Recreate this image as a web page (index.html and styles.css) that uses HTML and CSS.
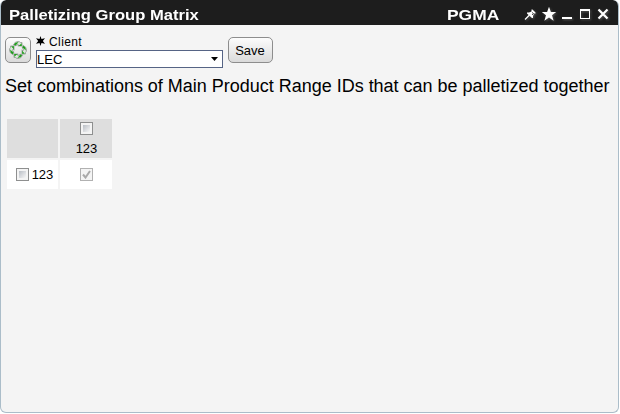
FILE: index.html
```html
<!DOCTYPE html>
<html lang="en">
<head>
<meta charset="utf-8">
<title>Palletizing Group Matrix</title>
<link rel="stylesheet" href="styles.css">
</head>
<body>
<main class="window">
  <header class="titlebar">
    <h1 class="title">Palletizing Group Matrix</h1>
    <span class="code">PGMA</span>
    <svg class="controls" width="86" height="16" viewBox="0 0 86 16">
      <path d="M1 13.500 5.500 9" fill="none" stroke="#fff" stroke-width="1.200"/>
      <path d="M3 6.500H5L7.500 5.500V3.500H8.500L11.500 6.500V7.500H10L9 10V12H8L3 7.500Z" fill="#fff"/>
      <path d="M8 6.500 9.500 7.500 8 9" fill="none" stroke="#1d1d1d" stroke-width=".8"/>
      <path d="M25 .8 26.900 6H32.200L28 9.200 29.600 14.800 25 11.500 20.400 14.800 22 9.200 17.800 6H23.100Z" fill="#fff"/>
      <path d="M38 11H48V13H38Z" fill="#fff"/>
      <path d="M56 3H66V13H56ZM57 5V12H65V5Z" fill="#fff" fill-rule="evenodd"/>
      <path d="M74.500 3.500 83.500 12.500M83.500 3.500 74.500 12.500" fill="none" stroke="#fff" stroke-width="2.200"/>
    </svg>
  </header>
  <div class="toolbar">
    <button class="btn refresh" aria-label="Refresh">
      <svg width="20" height="20" viewBox="0 0 20 20">
        <defs><g id="arrow">
          <path d="M5.500 5Q6.500 1.500 10 1.500 11.800 1.500 12.800 2.800L14 2.500V6H9.800L10.800 5Q9 3.800 8 5.800Z" fill="#dfe8df" stroke="#7d867e" stroke-width=".7"/>
          <path d="M5.800 5Q7 1.800 10.500 2.400L8.800 3.900 8 5.500ZM13.700 3.200V5.900H10.500Z" fill="#1f9f1c"/>
        </g></defs>
        <use href="#arrow"/><use href="#arrow" transform="rotate(90 10 10)"/><use href="#arrow" transform="rotate(180 10 10)"/><use href="#arrow" transform="rotate(270 10 10)"/>
      </svg>
    </button>
    <div class="field">
      <div class="label">
        <svg width="10" height="10" viewBox="0 0 10 10"><path d="M4.500 0 5.500 3 9 2.200 6.800 5 9 7.800 5.500 7 4.500 10 3.500 7 0 7.800 2.200 5 0 2.200 3.500 3Z"/></svg>
        <span>Client</span>
      </div>
      <div class="select"><span>LEC</span><svg width="7" height="4" viewBox="0 0 7 4"><path d="M0 0H7L3.500 4Z"/></svg></div>
    </div>
    <button class="btn save">Save</button>
  </div>
  <p class="intro">Set combinations of Main Product Range IDs that can be palletized together</p>
  <div class="matrix">
    <div class="cell head"></div>
    <div class="cell head column"><i class="check"></i><span>123</span></div>
    <div class="cell row"><i class="check"></i><span>123</span></div>
    <div class="cell"><i class="check disabled"><svg width="9" height="9" viewBox="0 0 9 9"><path d="M1 4.500 3.500 7.500 8 1" fill="none" stroke="#aaa" stroke-width="2"/></svg></i></div>
  </div>
</main>
</body>
</html>
```
FILE: styles.css
```css
* { box-sizing: border-box; }
body { margin: 0; background: #fff; font-family: "Liberation Sans", Arial, sans-serif; color: #000; }
.window { width: 619px; height: 413px; border: 1px solid #abbdc9; border-top: 0; border-radius: 6px; background: #f4f4f4; overflow: hidden; }
.titlebar { height: 25px; margin: 0 -1px; padding: 5px 8px 0 9px; display: flex; background: #1d1d1d; color: #fff; border-radius: 6px 6px 0 0; }
.title, .code { margin: 0; font-size: 15px; line-height: 20px; font-weight: bold; white-space: nowrap; flex: none; transform-origin: left; }
.title { width: 438px; transform: scaleX(1.105); }
.code { width: 77px; transform: scaleX(1.16); }
.controls { margin-top: 1px; flex: none; filter: drop-shadow(1px 1px 1px #555); }
.toolbar { display: flex; padding: 9px 0 0 4px; height: 46px; align-items: flex-start; }
.btn { margin-top: 3px; height: 26px; padding: 0; border: 1px solid #8d8d8d; border-radius: 5px; background: linear-gradient(#fcfcfc, #dadada); font: 13px "Liberation Sans", Arial, sans-serif; color: #000; }
.refresh { width: 26px; display: flex; align-items: center; justify-content: center; }
.save { width: 45px; margin-left: 5px; padding-right: 1px; }
.field { width: 187px; margin-left: 5px; }
.label { height: 16px; display: flex; align-items: center; gap: 3px; font-size: 12px; letter-spacing: .4px; }
.label svg { margin-top: -2px; }
.select { height: 18px; padding: 0 4px 0 0; display: flex; align-items: center; justify-content: space-between; border: 1px solid #566485; background: #fff; font-size: 13px; }
.intro { margin: 4px 0 0 4px; font-size: 18px; line-height: 22px; white-space: nowrap; letter-spacing: -.013px; }
.matrix { margin: 22px 0 0 6px; display: grid; grid-template: 39px 29px / 51px 52px; gap: 2px; font-size: 13px; line-height: 15px; }
.cell { display: flex; align-items: center; justify-content: center; background: #fff; }
.head { background: #dedede; }
.column { flex-direction: column; gap: 6px; }
.column span { padding-left: 1px; }
.row { gap: 3px; padding-left: 4px; }
.check { width: 13px; height: 13px; border: 1px solid #8e8f8f; background: linear-gradient(135deg, #b9bec5, #f7f7f7) 2px 2px / 7px 7px no-repeat, #f4f4f4; display: flex; align-items: center; justify-content: center; }
.disabled { border-color: #b1b1b1; background: #f4f4f4; }
```
